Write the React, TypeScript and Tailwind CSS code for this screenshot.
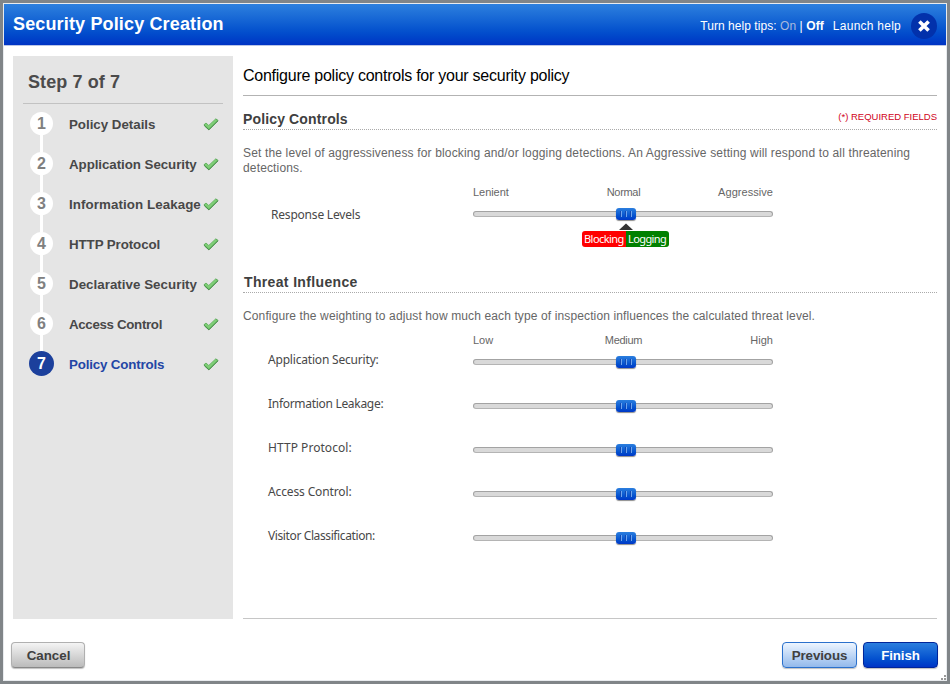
import React from "react";

const steps = [
  { label: "Policy Details", tracking: "tracking-[-0.02px]" },
  { label: "Application Security", tracking: "tracking-[-0.06px]" },
  { label: "Information Leakage", tracking: "tracking-[0.08px]" },
  { label: "HTTP Protocol", tracking: "tracking-[-0.09px]" },
  { label: "Declarative Security", tracking: "tracking-[0.03px]" },
  { label: "Access Control", tracking: "tracking-[-0.34px]" },
  { label: "Policy Controls", tracking: "tracking-[-0.17px]" },
];

const influences = [
  { label: "Application Security:", tracking: "tracking-[-0.19px]" },
  { label: "Information Leakage:", tracking: "tracking-[-0.3px]" },
  { label: "HTTP Protocol:", tracking: "tracking-[0.05px]" },
  { label: "Access Control:", tracking: "tracking-[-0.13px]" },
  { label: "Visitor Classification:", tracking: "tracking-[-0.39px]" },
];

function Check() {
  return (
    <svg width="16" height="13" viewBox="0 0 16 13" className="block shrink-0">
      <path
        d="M0.9 6.9 L3 5 L5.8 7.6 L12.8 0.9 L15 2.4 L5.9 11.6 Z"
        fill="#74c86c"
        stroke="#58a655"
        strokeWidth="1"
        strokeLinejoin="round"
      />
      <path d="M2 6.9 L3 6.4 L5.8 9 L13.2 2" fill="none" stroke="#7fce77" strokeWidth="1.8" />
      <path d="M1.4 7.9 L5.9 11.9 L15.1 2.8" fill="none" stroke="#3c8440" strokeWidth="0.8" />
    </svg>
  );
}

function Slider() {
  return (
    <div className="relative h-[14px] w-[300px] pt-[3px]">
      <div className="h-[6px] rounded-[3px] border border-[#a3a3a3] border-b-[#b4b4b4] bg-[#d9d9d9]" />
      <div className="absolute left-[143px] top-0 flex h-[12px] w-[20px] items-center justify-center gap-[3px] rounded-[3px] bg-linear-to-b from-[#2b7ede] to-[#0036c6] shadow-[0_1px_1px_rgba(0,0,0,0.45)]">
        <i className="h-[6px] w-[2px] border-l border-[#1149b4] bg-[#6ea4ee]" />
        <i className="h-[6px] w-[2px] border-l border-[#1149b4] bg-[#6ea4ee]" />
        <i className="h-[6px] w-[2px] border-l border-[#1149b4] bg-[#6ea4ee]" />
      </div>
    </div>
  );
}

function ScaleLabels({ items }: { items: [string, string, string] }) {
  return (
    <div className="-mt-px ml-[230px] grid w-[300px] grid-cols-[1fr_auto_1fr] text-[11px] leading-[14px] tracking-[-0.05px] text-[#666]">
      <span>{items[0]}</span>
      <span className="pl-px tracking-[-0.3px]">{items[1]}</span>
      <span className="text-right tracking-[0.05px]">{items[2]}</span>
    </div>
  );
}

function Header() {
  return (
    <header className="flex h-[42px] items-center border-b border-[#b9c5e6] bg-linear-to-b from-[#2d80de] to-[#0033c4] pl-[9px] pr-[9px] text-white">
      <h1 className="mb-px text-[18px] font-bold leading-[20px] tracking-[0.15px]">Security Policy Creation</h1>
      <div className="ml-auto flex items-center whitespace-pre text-[12px] leading-[14px] tracking-[0.09px]">
        <span className="mt-[2px] tracking-[0.05px]">Turn help tips: </span>
        <span className="mt-[2px] text-[#a9b9dc]">On</span>
        <span className="mt-[2px]"> | </span>
        <b className="mt-[2px]">Off</b>
        <span className="ml-[9px] mt-[2px] tracking-[0.25px]">Launch help</span>
        <svg width="26" height="26" viewBox="0 0 26 26" className="ml-[10px] mt-[2px] block">
          <circle cx="13" cy="13" r="13" fill="#0231ab" />
          <path d="M8.4 8.4 L17.6 17.6 M17.6 8.4 L8.4 17.6" stroke="#fff" strokeWidth="3.6" />
        </svg>
      </div>
    </header>
  );
}

function Sidebar() {
  return (
    <aside className="h-[563px] w-[220px] shrink-0 bg-[#e5e5e5] px-[10px]">
      <h2 className="h-[48px] border-b border-[#c2c2c2] pl-[5px] pt-[15px] text-[18px] font-bold leading-[22px] tracking-[0.1px] text-[#4b4b4b]">
        Step 7 of 7
      </h2>
      <ol className="pt-[8px]">
        {steps.map((step, i) => {
          const last = i === steps.length - 1;
          return (
            <li key={step.label} className="flex h-[40px] items-start">
              <div className="flex h-full w-[37px] flex-col items-center">
                <span
                  className={
                    last
                      ? "-mt-px flex size-[25px] shrink-0 items-center justify-center rounded-full bg-[#1c409c] text-[16px] font-bold leading-[20px] text-white"
                      : "flex size-[23px] shrink-0 items-center justify-center rounded-full bg-white text-[16px] font-bold leading-[20px] text-[#808080]"
                  }
                >
                  {i + 1}
                </span>
                {!last && <span className="w-[3px] flex-1 bg-white" />}
              </div>
              <span
                className={
                  "ml-[9px] mt-[5px] w-[134px] whitespace-nowrap text-[13.33px] font-bold leading-[16px] " +
                  step.tracking +
                  (last ? " text-[#2346a5]" : " text-[#484848]")
                }
              >
                {step.label}
              </span>
              <div className="pt-[6px]">
                <Check />
              </div>
            </li>
          );
        })}
      </ol>
    </aside>
  );
}

function Content() {
  return (
    <main className="ml-[10px] h-[563px] w-[694px] border-b border-[#c6c6c6]">
      <h2 className="h-[40px] border-b border-[#b3b3b3] pt-[10px] text-[16px] leading-[20px] tracking-[-0.25px] text-black">
        Configure policy controls for your security policy
      </h2>
      <div className="flex h-[34px] justify-between border-b border-dotted border-[#aaa]">
        <h3 className="pt-[15px] text-[14px] font-bold leading-[16px] tracking-[0.14px] text-[#404040]">Policy Controls</h3>
        <span className="pt-[14px] text-[9.5px] leading-[14px] text-[#d0021b]">(*) REQUIRED FIELDS</span>
      </div>
      <p className="h-[56px] whitespace-nowrap pt-[16px] text-[12px] leading-[15px] tracking-[0.15px] text-[#666]">
        Set the level of aggressiveness for blocking and/or logging detections. An Aggressive setting will respond to all threatening
        <br />
        detections.
      </p>
      <ScaleLabels items={["Lenient", "Normal", "Aggressive"]} />
      <div className="flex pt-[9px]">
        <span className="-mt-px w-[230px] pl-[28px] font-['Noto_Sans',sans-serif] text-[12px] leading-[16px] tracking-[-0.2px] text-[#484848]">
          Response Levels
        </span>
        <Slider />
      </div>
      <div className="ml-[339px] flex w-[87px] flex-col items-center">
        <svg width="14" height="8" viewBox="0 0 14 8" className="block">
          <path d="M7 0.5 L14 7 H0 Z" fill="#333" />
        </svg>
        <div className="flex h-[16px] w-full overflow-hidden rounded-[3px] font-['Noto_Sans',sans-serif] text-[11px] leading-[16px] text-white">
          <span className="w-[44px] bg-[#f00] pl-[2px] tracking-[-0.55px]">Blocking</span>
          <span className="w-[43px] bg-[#008000] pl-[2px] tracking-[-0.6px]">Logging</span>
        </div>
      </div>
      <h3 className="mt-[26px] h-[20px] border-b border-dotted border-[#aaa] pl-px text-[14px] font-bold leading-[18px] tracking-[0.35px] text-[#404040]">
        Threat Influence
      </h3>
      <p className="h-[41px] whitespace-nowrap pt-[16px] text-[12px] leading-[15px] tracking-[0.123px] text-[#666]">
        Configure the weighting to adjust how much each type of inspection influences the calculated threat level.
      </p>
      <ScaleLabels items={["Low", "Medium", "High"]} />
      <div className="pt-[5px]">
        {influences.map((item) => (
          <div key={item.label} className="flex h-[44px]">
            <span
              className={
                "w-[230px] pl-[25px] font-['Noto_Sans',sans-serif] text-[12px] leading-[16px] text-[#484848] " + item.tracking
              }
            >
              {item.label}
            </span>
            <div className="pt-[4px]">
              <Slider />
            </div>
          </div>
        ))}
      </div>
    </main>
  );
}

const buttonBase =
  "h-[26px] rounded-[4px] border text-[13.33px] font-bold leading-[24px] shadow-[0_1px_1px_rgba(0,0,0,0.25)] ";

function Footer() {
  return (
    <footer className="flex pl-[7px] pr-[8px] pt-[23px]">
      <button
        className={
          buttonBase +
          "w-[74px] border-[#b0b0b0] border-b-[#888] bg-linear-to-b from-[#f4f4f4] to-[#bbb] pl-px pt-px text-[#404040]"
        }
      >
        Cancel
      </button>
      <button
        className={
          buttonBase +
          "ml-auto w-[75px] border-[#2a70cc] bg-linear-to-b from-[#edf5ff] to-[#93b9eb] pt-px tracking-[-0.08px] text-[#404040]"
        }
      >
        Previous
      </button>
      <button
        className={
          buttonBase +
          "ml-[6px] w-[75px] border-[#00259a] bg-linear-to-b from-[#2b7ede] to-[#0034c6] pt-px tracking-[-0.1px] text-white"
        }
      >
        Finish
      </button>
    </footer>
  );
}

export default function App() {
  return (
    <div className="h-[684px] w-[950px] overflow-hidden bg-[#808588] p-[3px] font-['Liberation_Sans',Arial,sans-serif]">
      <div className="relative h-[678px] w-[944px] border border-[#e8ebee] bg-white">
        <Header />
        <div className="flex pl-[9px] pt-[10px]">
          <Sidebar />
          <Content />
        </div>
        <Footer />
        <svg width="8" height="8" viewBox="0 0 8 8" className="absolute bottom-0 right-0">
          <path d="M6 3h2v2H6zM6 6h2v2H6zM3 6h2v2H3z" fill="#999" />
        </svg>
      </div>
    </div>
  );
}
